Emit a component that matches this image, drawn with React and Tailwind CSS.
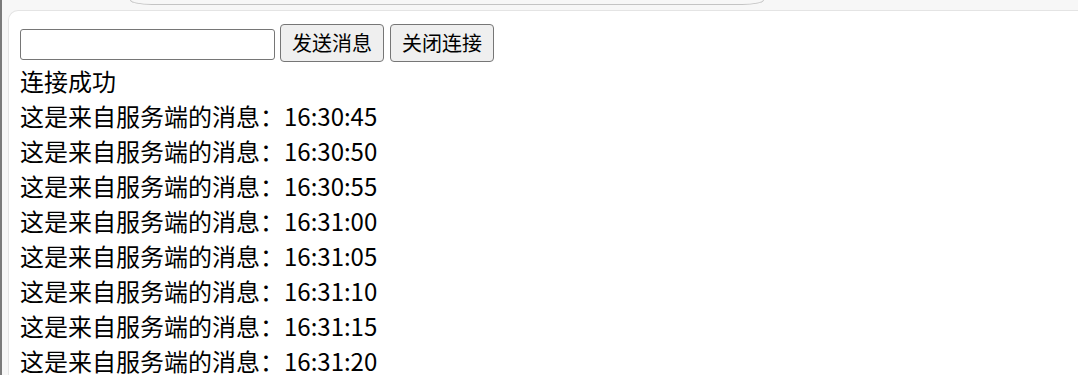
import React from "react";

const times = ["16:30:45", "16:30:50", "16:30:55", "16:31:00", "16:31:05", "16:31:10", "16:31:15", "16:31:20"];

export default function App() {
  return (
    <div
      className="w-[1078px] h-[375px] overflow-hidden flex bg-[#f7f7f7]"
      style={{ fontFamily: '"Noto Sans CJK SC", "Noto Sans", sans-serif' }}
    >
      <div className="w-[2px] shrink-0 bg-[#7b7b7b]" />
      <div className="flex-1 flex flex-col min-w-0">
        <div className="h-[10px] shrink-0">
          <div className="ml-[128px] w-[634px] h-[5px] border-x border-b border-[#c4c4c4] rounded-bl-[22px_5px] rounded-br-[22px_5px] bg-[#f7f7f7]" />
        </div>
        <div className="flex-1 ml-[6px] bg-white rounded-tl-[10px] border-t border-l border-[#e4e4e4] pl-[11px] pt-[11px] text-black">
          <div className="flex items-start h-[41px]">
            <input
              type="text"
              className="mt-[7px] w-[255px] h-[31px] border border-[#767676] rounded-[3px] bg-white outline-none px-1"
            />
            <button className="ml-[5px] mt-[2px] w-[104px] h-[38px] border border-[#767676] rounded-[4px] bg-[#efefef] text-[20px] leading-[28px]">
              发送消息
            </button>
            <button className="ml-[6px] mt-[2px] w-[104px] h-[38px] border border-[#767676] rounded-[4px] bg-[#efefef] text-[20px] leading-[28px]">
              关闭连接
            </button>
          </div>
          <div className="text-[24px] leading-[35px] h-[35px]">连接成功</div>
          {times.map((t) => (
            <div key={t} className="text-[24px] leading-[35px] h-[35px] whitespace-nowrap">
              这是来自服务端的消息：{t}
            </div>
          ))}
        </div>
      </div>
    </div>
  );
}
